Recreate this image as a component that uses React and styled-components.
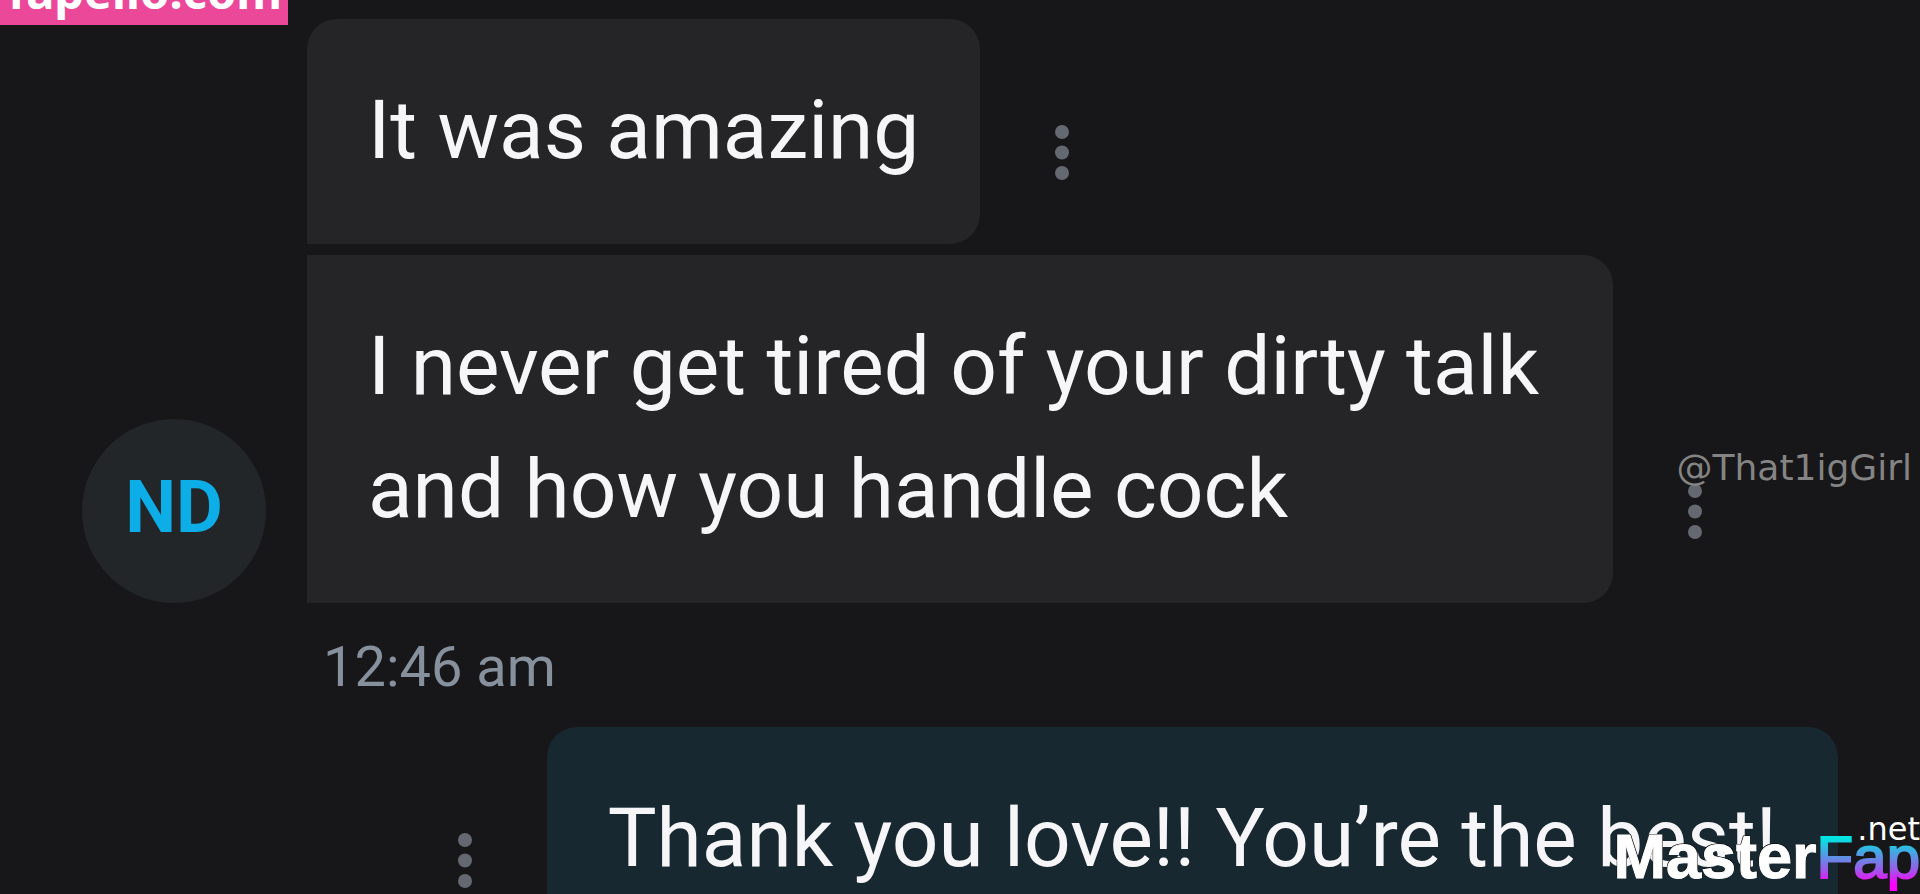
import React from "react";
import styled, { createGlobalStyle } from "styled-components";

const incoming = [
  { id: 1, text: "It was amazing" },
  { id: 2, text: "I never get tired of your dirty talk and how you handle cock" },
];

const MessageMenu = () => (
  <MenuButton type="button" aria-label="Message options">
    <svg width="14" height="55" viewBox="0 0 14 55" fill="currentColor">
      <circle cx="7" cy="7" r="7" />
      <circle cx="7" cy="27.5" r="7" />
      <circle cx="7" cy="48" r="7" />
    </svg>
  </MenuButton>
);

const App = () => {
  return (
    <Page>
      <GlobalStyle />
      <Thread>
        <Group>
          <Avatar>ND</Avatar>
          <Stack>
            {incoming.map((message, index) => (
              <Row key={message.id}>
                <Bubble $first={index === 0}>{message.text}</Bubble>
                <MessageMenu />
              </Row>
            ))}
          </Stack>
        </Group>
        <Time>12:46 am</Time>
        <Row $own>
          <MessageMenu />
          <Bubble $own $first>
            Thank you love!! You’re the best!
          </Bubble>
        </Row>
      </Thread>

      <SiteTag>fapello.com</SiteTag>
      <Handle>@That1igGirl</Handle>
      <Logo>
        <span className="net">.net</span>
        <span className="master">Master</span>
        <span className="fap">Fap</span>
      </Logo>
    </Page>
  );
};

export default App;

const GlobalStyle = createGlobalStyle`
  * {
    box-sizing: border-box;
  }
  body {
    margin: 0;
    background: #171719;
    font-family: Roboto, "Liberation Sans", sans-serif;
  }
`;
const Page = styled.div`
  position: relative;
  height: 100vh;
  overflow: hidden;
`;
const Thread = styled.main`
  display: flex;
  flex-direction: column;
  padding: 19px 82px 0;
`;
const Group = styled.section`
  display: flex;
  align-items: flex-end;
  gap: 41px;
`;
const Avatar = styled.div`
  display: flex;
  align-items: center;
  justify-content: center;
  flex-shrink: 0;
  width: 184px;
  height: 184px;
  padding-bottom: 8px;
  border-radius: 50%;
  background: #222628;
  color: #0dade8;
  font-size: 72px;
  font-weight: 700;
`;
const Stack = styled.div`
  display: flex;
  flex: 1;
  flex-direction: column;
  gap: 11px;
  min-width: 0;
`;
const Row = styled.div`
  display: flex;
  align-items: flex-end;
  justify-content: ${({ $own }) => ($own ? "flex-end" : "flex-start")};
  gap: 75px;
`;
const Bubble = styled.div`
  max-width: ${({ $own }) => ($own ? "none" : "1306px")};
  padding: 50px 61px 52px;
  border-radius: ${({ $first }) => ($first ? "30px" : "0")} 30px 30px 0;
  background: ${({ $own }) => ($own ? "#172830" : "#252528")};
  color: #f6f6f8;
  font-size: 82px;
  line-height: 123px;
`;
const MenuButton = styled.button`
  flex-shrink: 0;
  margin: 0 0 64px;
  padding: 0;
  border: none;
  background: none;
  color: #646871;
  cursor: pointer;
  svg {
    display: block;
  }
`;
const Time = styled.time`
  padding: 25px 0 21px 241px;
  color: #87909d;
  font-size: 56px;
  line-height: 78px;
`;
const SiteTag = styled.div`
  position: absolute;
  top: 0;
  left: 0;
  display: flex;
  align-items: flex-end;
  height: 25px;
  padding: 0 6px 0 8px;
  overflow: hidden;
  background: #ec4899;
  color: #fff;
  font-family: "Noto Sans", "Open Sans", sans-serif;
  font-size: 47px;
  font-weight: 700;
  line-height: 68px;
`;
const Handle = styled.div`
  position: absolute;
  top: 446px;
  right: 8px;
  color: #848484;
  font-family: "DejaVu Sans", sans-serif;
  font-size: 36px;
  line-height: 44px;
`;
const Logo = styled.div`
  position: absolute;
  right: 0;
  bottom: 0;
  display: flex;
  align-items: baseline;
  font-family: "Liberation Sans", sans-serif;
  line-height: 72px;
  .master {
    color: #fff;
    font-size: 63px;
    font-weight: 700;
    -webkit-text-stroke: 1px #fff;
    text-shadow: -1px -1px 0 #111, 1px -1px 0 #111;
  }
  .fap {
    background: linear-gradient(#00e5e0 22%, #9a5be8 66%, #ff00ff 86%);
    background-clip: text;
    color: transparent;
    font-size: 60px;
    -webkit-text-stroke: 2px transparent;
  }
  .net {
    position: absolute;
    top: -11px;
    right: 0;
    color: #fff;
    font-family: "DejaVu Sans", sans-serif;
    font-size: 32px;
    line-height: 40px;
  }
`;
